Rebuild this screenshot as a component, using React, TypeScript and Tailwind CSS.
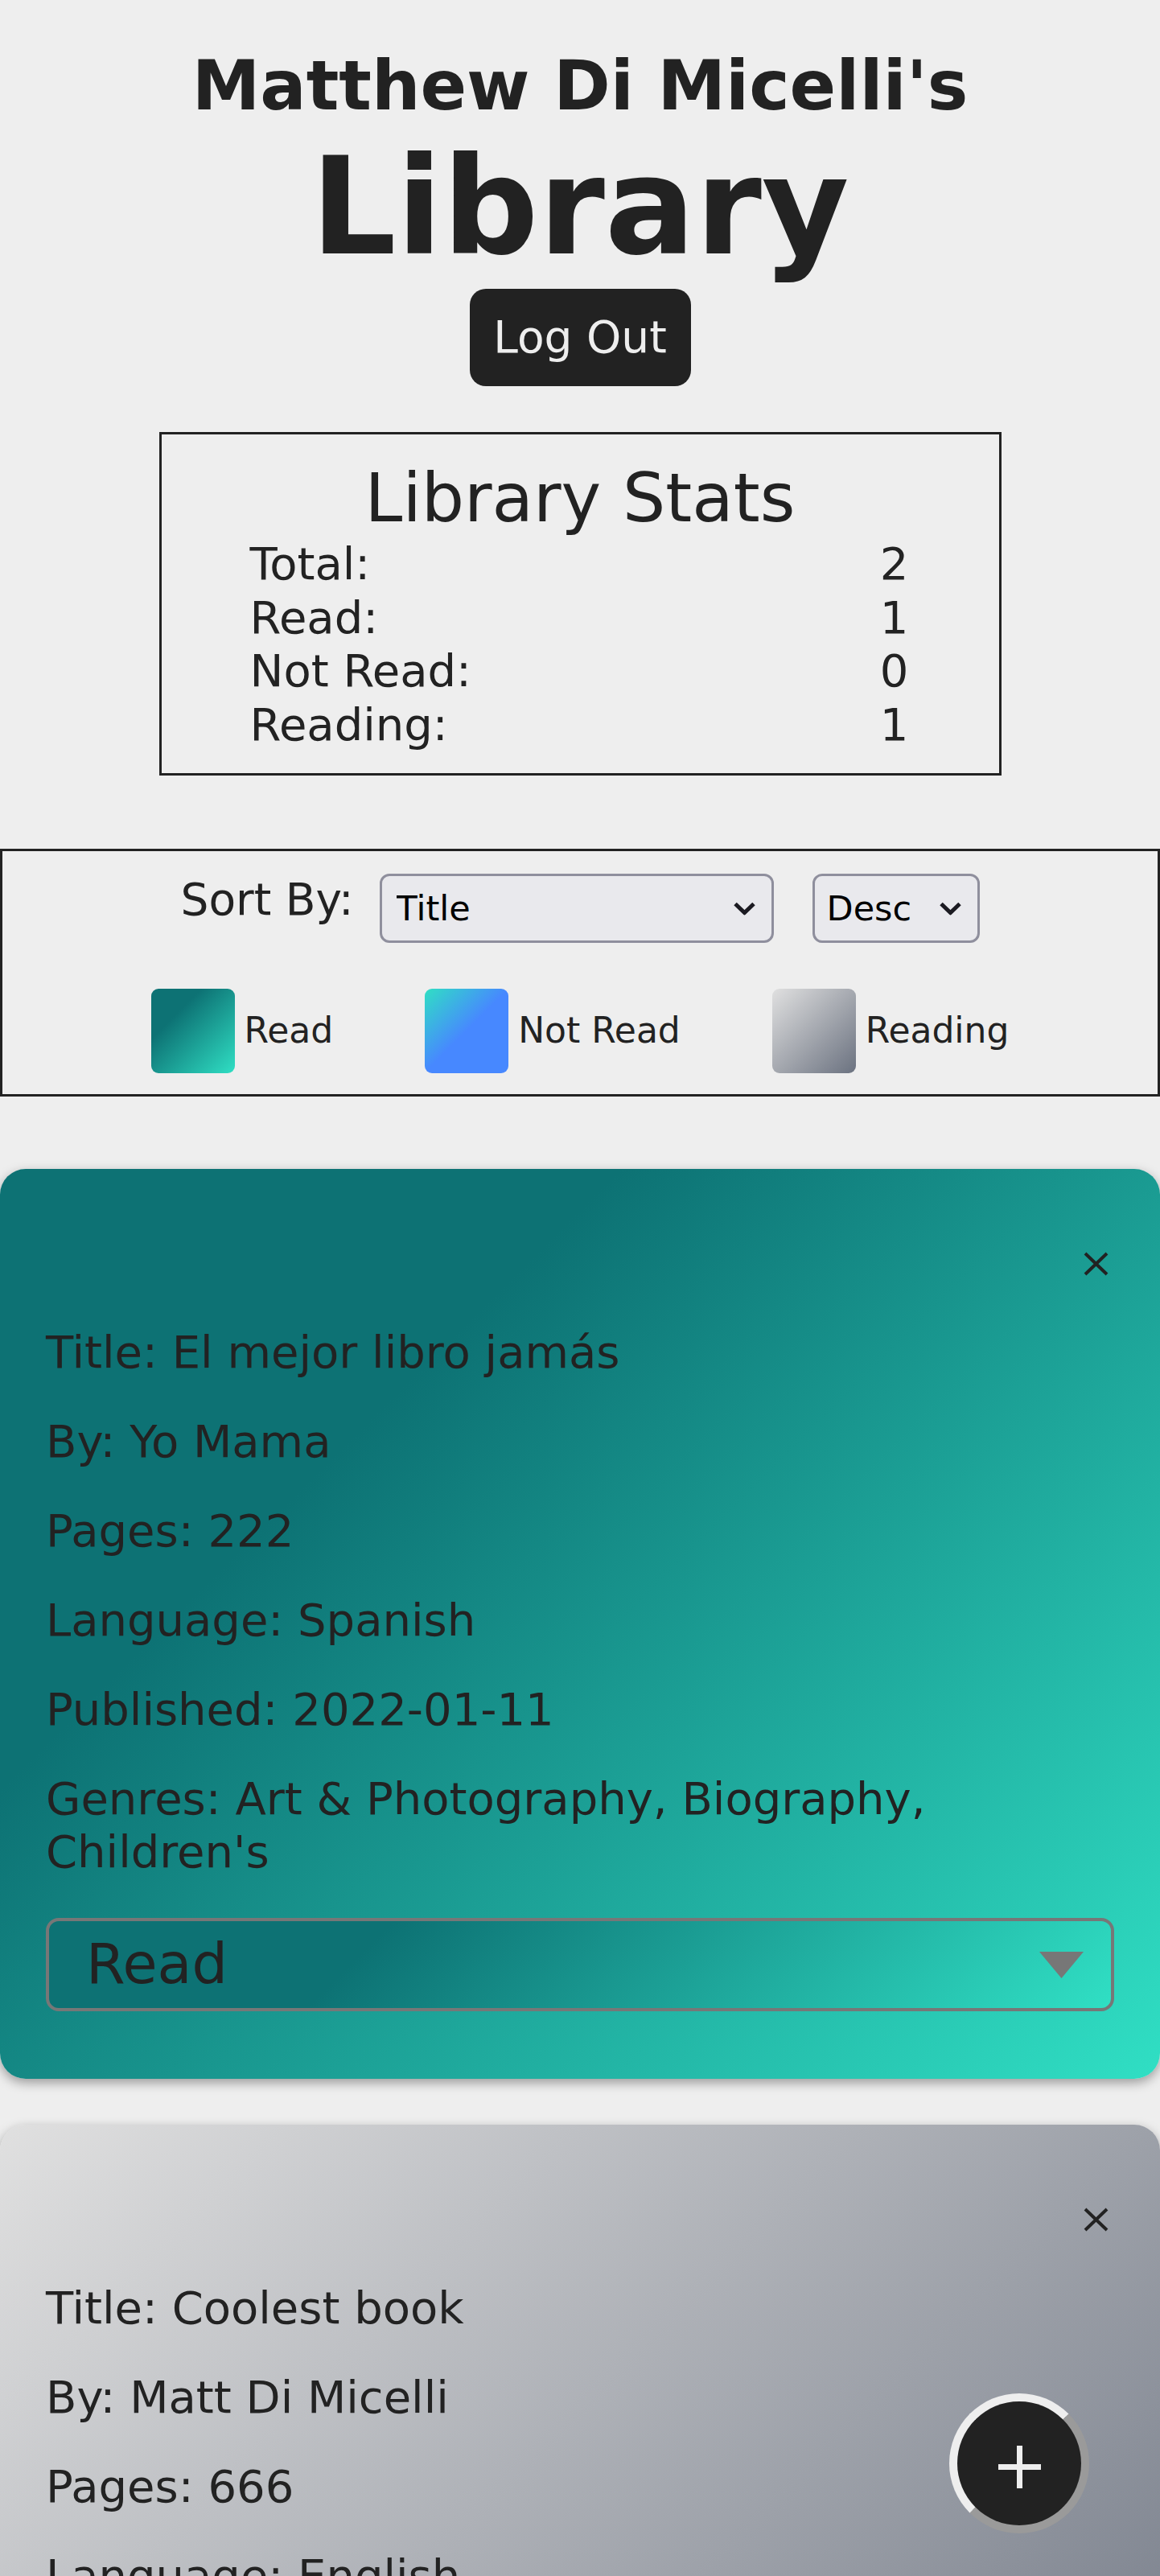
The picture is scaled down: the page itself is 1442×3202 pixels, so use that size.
import { useState } from "react"

interface Book {
  id: number
  title: string
  author: string
  pages: number
  language: string
  published: string
  genres: string[]
  status: "Read" | "Not Read" | "Reading"
}

const books: Book[] = [
  {
    id: 1,
    title: "El mejor libro jamás",
    author: "Yo Mama",
    pages: 222,
    language: "Spanish",
    published: "2022-01-11",
    genres: ["Art & Photography", "Biography", "Children's"],
    status: "Read",
  },
  {
    id: 2,
    title: "Coolest book",
    author: "Matt Di Micelli",
    pages: 666,
    language: "English",
    published: "2021-06-06",
    genres: ["Fantasy", "Horror"],
    status: "Reading",
  },
]

const statusBg: Record<Book["status"], string> = {
  Read: "bg-[linear-gradient(135deg,#0d7274_30%,#30dfc4_100%)]",
  "Not Read": "bg-[linear-gradient(135deg,#30dfc4_0%,#4788ff_50%,#4788ff_100%)]",
  Reading: "bg-[linear-gradient(135deg,#e0e0e0_0%,#6b7280_100%)]",
}

function Chevron() {
  return (
    <svg width="29" height="17" viewBox="0 0 29 17" className="pointer-events-none absolute right-[22px] top-1/2 -translate-y-1/2">
      <path d="M3 3 L14.5 14 L26 3" fill="none" stroke="#1c1b22" strokeWidth="5" />
    </svg>
  )
}

function BookCard({ book }: { book: Book }) {
  const [status, setStatus] = useState(book.status)
  return (
    <div className={`rounded-[32px] pt-[103px] pb-[84px] pl-[57px] pr-[57px] shadow-[0_5px_14px_rgba(0,0,0,0.35)] ${statusBg[status]}`}>
      <div className="flex justify-end pr-[7px]">
        <button className="block">
          <svg width="31" height="30" viewBox="0 0 31 30">
            <path d="M2 2 L29 28 M29 2 L2 28" stroke="#222" strokeWidth="4" />
          </svg>
        </button>
      </div>
      <div className="mt-[62px] text-[56px] leading-[66px] text-[#222]">
        <p className="mb-[45px]">Title: {book.title}</p>
        <p className="mb-[45px]">By: {book.author}</p>
        <p className="mb-[45px]">Pages: {book.pages}</p>
        <p className="mb-[45px]">Language: {book.language}</p>
        <p className="mb-[45px]">Published: {book.published}</p>
        <p className="mb-[49px]">Genres: {book.genres.join(", ")}</p>
      </div>
      <div className="relative">
        <select
          value={status}
          onChange={(e) => setStatus(e.target.value as Book["status"])}
          className={`block h-[116px] w-full appearance-none rounded-[16px] border-[4px] border-[#777] pl-[46px] text-[70px] text-[#222] outline-none ${statusBg[status]}`}
        >
          <option>Read</option>
          <option>Not Read</option>
          <option>Reading</option>
        </select>
        <svg width="55" height="33" viewBox="0 0 55 33" className="pointer-events-none absolute right-[38px] top-[42px]">
          <path d="M0 0 H55 L27.5 33 Z" fill="#777" />
        </svg>
      </div>
    </div>
  )
}

export default function App() {
  return (
    <div className="min-h-screen bg-[#eeeeee] font-['DejaVu_Sans','Liberation_Sans',sans-serif] text-[#222]">
      <header className="flex flex-col items-center pt-[57px]">
        <h2 className="text-[85px] font-bold leading-[99px]">Matthew Di Micelli's</h2>
        <h1 className="mt-[4px] text-[167px] font-bold leading-[194px]">Library</h1>
        <button className="mt-[5px] h-[121px] w-[275px] rounded-[20px] bg-[#222] text-[55px] text-[#eeeeee]">
          Log Out
        </button>
      </header>

      <section className="mx-auto mt-[57px] w-[1047px] border-[3px] border-[#222] pt-[30px] pb-[26px]">
        <h3 className="text-center text-[84px] leading-[98px]">Library Stats</h3>
        <div className="pl-[110px] pr-[112px] text-[56px] leading-[66.7px]">
          <div className="flex justify-between"><span>Total:</span><span>2</span></div>
          <div className="flex justify-between"><span>Read:</span><span>1</span></div>
          <div className="flex justify-between"><span>Not Read:</span><span>0</span></div>
          <div className="flex justify-between"><span>Reading:</span><span>1</span></div>
        </div>
      </section>

      <section className="mt-[91px] border-[3px] border-[#222] pt-[28px] pb-[26px]">
        <div className="flex items-start justify-center">
          <span className="mr-[32px] text-[55px] leading-[64px]">Sort By:</span>
          <div className="relative mr-[48px]">
            <select className="block h-[86px] w-[490px] appearance-none rounded-[12px] border-[3px] border-[#8f8f9d] bg-[#e9e9ed] pl-[18px] text-[43px] text-black outline-none">
              <option>Title</option>
              <option>Author</option>
              <option>Pages</option>
            </select>
            <Chevron />
          </div>
          <div className="relative">
            <select className="block h-[86px] w-[208px] appearance-none rounded-[12px] border-[3px] border-[#8f8f9d] bg-[#e9e9ed] pl-[15px] text-[43px] text-black outline-none">
              <option>Desc</option>
              <option>Asc</option>
            </select>
            <Chevron />
          </div>
        </div>
        <div className="mt-[57px] flex items-center justify-center gap-[114px] text-[44px]">
          <div className="flex items-center gap-[12px]">
            <div className={`h-[105px] w-[104px] rounded-[9px] ${statusBg.Read}`} />
            <span>Read</span>
          </div>
          <div className="flex items-center gap-[12px]">
            <div className={`h-[105px] w-[104px] rounded-[9px] ${statusBg["Not Read"]}`} />
            <span>Not Read</span>
          </div>
          <div className="flex items-center gap-[12px]">
            <div className={`h-[105px] w-[104px] rounded-[9px] ${statusBg.Reading}`} />
            <span>Reading</span>
          </div>
        </div>
      </section>

      <main className="mt-[90px] flex flex-col gap-[57px] pb-[200px]">
        {books.map((b) => (
          <BookCard key={b.id} book={b} />
        ))}
      </main>

      <button className="fixed bottom-[53px] right-[88px] flex h-[174px] w-[174px] items-center justify-center rounded-full border-[10px] border-t-[#eeeeee] border-l-[#eeeeee] border-r-[#9a9a9a] border-b-[#9a9a9a] bg-[#222]">
        <svg width="53" height="53" viewBox="0 0 53 53" className="mt-[8px]">
          <rect x="23" y="0" width="7" height="53" fill="#eeeeee" />
          <rect x="0" y="23" width="53" height="7" fill="#eeeeee" />
        </svg>
      </button>
    </div>
  )
}
